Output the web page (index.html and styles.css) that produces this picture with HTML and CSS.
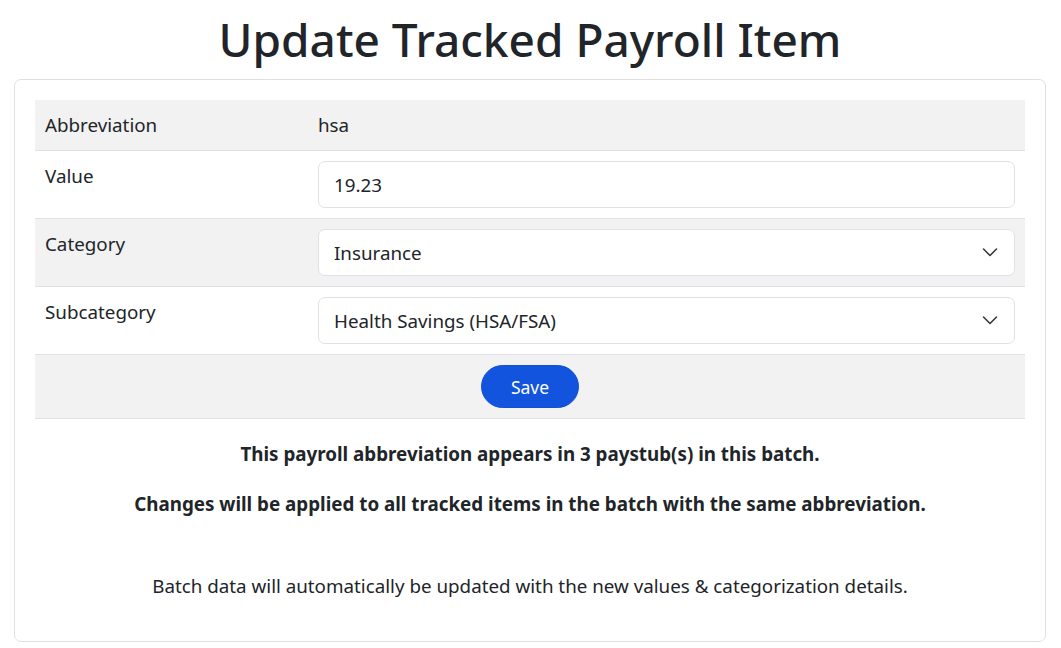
FILE: index.html
```html
<!DOCTYPE html>
<html lang="en">
<head>
  <meta charset="UTF-8" />
  <meta name="viewport" content="width=device-width, initial-scale=1.0"/>
  <title>Update Tracked Payroll Item</title>
  <link rel="stylesheet" href="styles.css">
</head>
<body>
  <main class="page">
    <h1 class="page-title">Update Tracked Payroll Item</h1>

    <div class="card">
      <table class="item-table">
        <tbody>
          <tr class="striped">
            <td class="label-cell">Abbreviation</td>
            <td>hsa</td>
          </tr>
          <tr>
            <td class="label-cell">Value</td>
            <td><input class="field" type="text" value="19.23"></td>
          </tr>
          <tr class="striped">
            <td class="label-cell">Category</td>
            <td>
              <div class="select-wrap">
                <select class="field">
                  <option>Insurance</option>
                </select>
                <svg class="chevron" viewBox="0 0 16 16" width="16" height="16">
                  <path d="m1.5 5 6.5 6.5 6.5-6.5" fill="none" stroke="#343a40" stroke-width="1.6" stroke-linecap="round" stroke-linejoin="round"/>
                </svg>
              </div>
            </td>
          </tr>
          <tr>
            <td class="label-cell">Subcategory</td>
            <td>
              <div class="select-wrap">
                <select class="field">
                  <option>Health Savings (HSA/FSA)</option>
                </select>
                <svg class="chevron" viewBox="0 0 16 16" width="16" height="16">
                  <path d="m1.5 5 6.5 6.5 6.5-6.5" fill="none" stroke="#343a40" stroke-width="1.6" stroke-linecap="round" stroke-linejoin="round"/>
                </svg>
              </div>
            </td>
          </tr>
          <tr class="striped">
            <td colspan="2" class="action-cell">
              <button class="save-btn" type="button">Save</button>
            </td>
          </tr>
        </tbody>
      </table>

      <p class="note note-bold">This payroll abbreviation appears in 3 paystub(s) in this batch.</p>
      <p class="note note-bold">Changes will be applied to all tracked items in the batch with the same abbreviation.</p>
      <p class="note note-spaced">Batch data will automatically be updated with the new values &amp; categorization details.</p>
    </div>
  </main>
</body>
</html>
```

FILE: styles.css
```css
body {
  margin: 0;
  font-family: 'Noto Sans', 'Open Sans', sans-serif;
  font-size: 18.8px;
  line-height: 30px;
  color: #212529;
  background: #fff;
}

.page {
  padding: 9px 15px 0 14px;
}

.page-title {
  margin: 0 0 10px;
  font-size: 46px;
  font-weight: 500;
  line-height: 60px;
  text-align: center;
}

.card {
  border: 1px solid #dfdfdf;
  border-radius: 7px;
  padding: 20px;
}

.item-table {
  width: 100%;
  border-collapse: collapse;
  margin-bottom: 20px;
}

.item-table td {
  padding: 10px;
  vertical-align: top;
  border-bottom: 1px solid #dee2e6;
}

.item-table tr.striped td {
  background: #f2f2f2;
}

.label-cell {
  width: 253px;
}

.field {
  display: block;
  width: 100%;
  box-sizing: border-box;
  height: 47px;
  padding: 7px 15px;
  font-family: inherit;
  font-size: 18.8px;
  color: #212529;
  background: #fff;
  border: 1px solid #dee2e6;
  border-radius: 7px;
  outline: none;
}

.select-wrap {
  position: relative;
}

.select-wrap select {
  appearance: none;
  -webkit-appearance: none;
  padding-right: 50px;
}

.chevron {
  position: absolute;
  right: 17px;
  top: 15px;
  pointer-events: none;
}

.action-cell {
  text-align: center;
}

.save-btn {
  height: 43px;
  padding: 0 29px;
  font-family: inherit;
  font-size: 17.5px;
  color: #fff;
  background: #1254dd;
  border: 1px solid #1250d0;
  border-radius: 22px;
  cursor: pointer;
}

.note {
  margin: 0 0 20px;
  text-align: center;
}

.note-bold {
  font-weight: 700;
}

.note-spaced {
  margin-top: 52px;
}
```
